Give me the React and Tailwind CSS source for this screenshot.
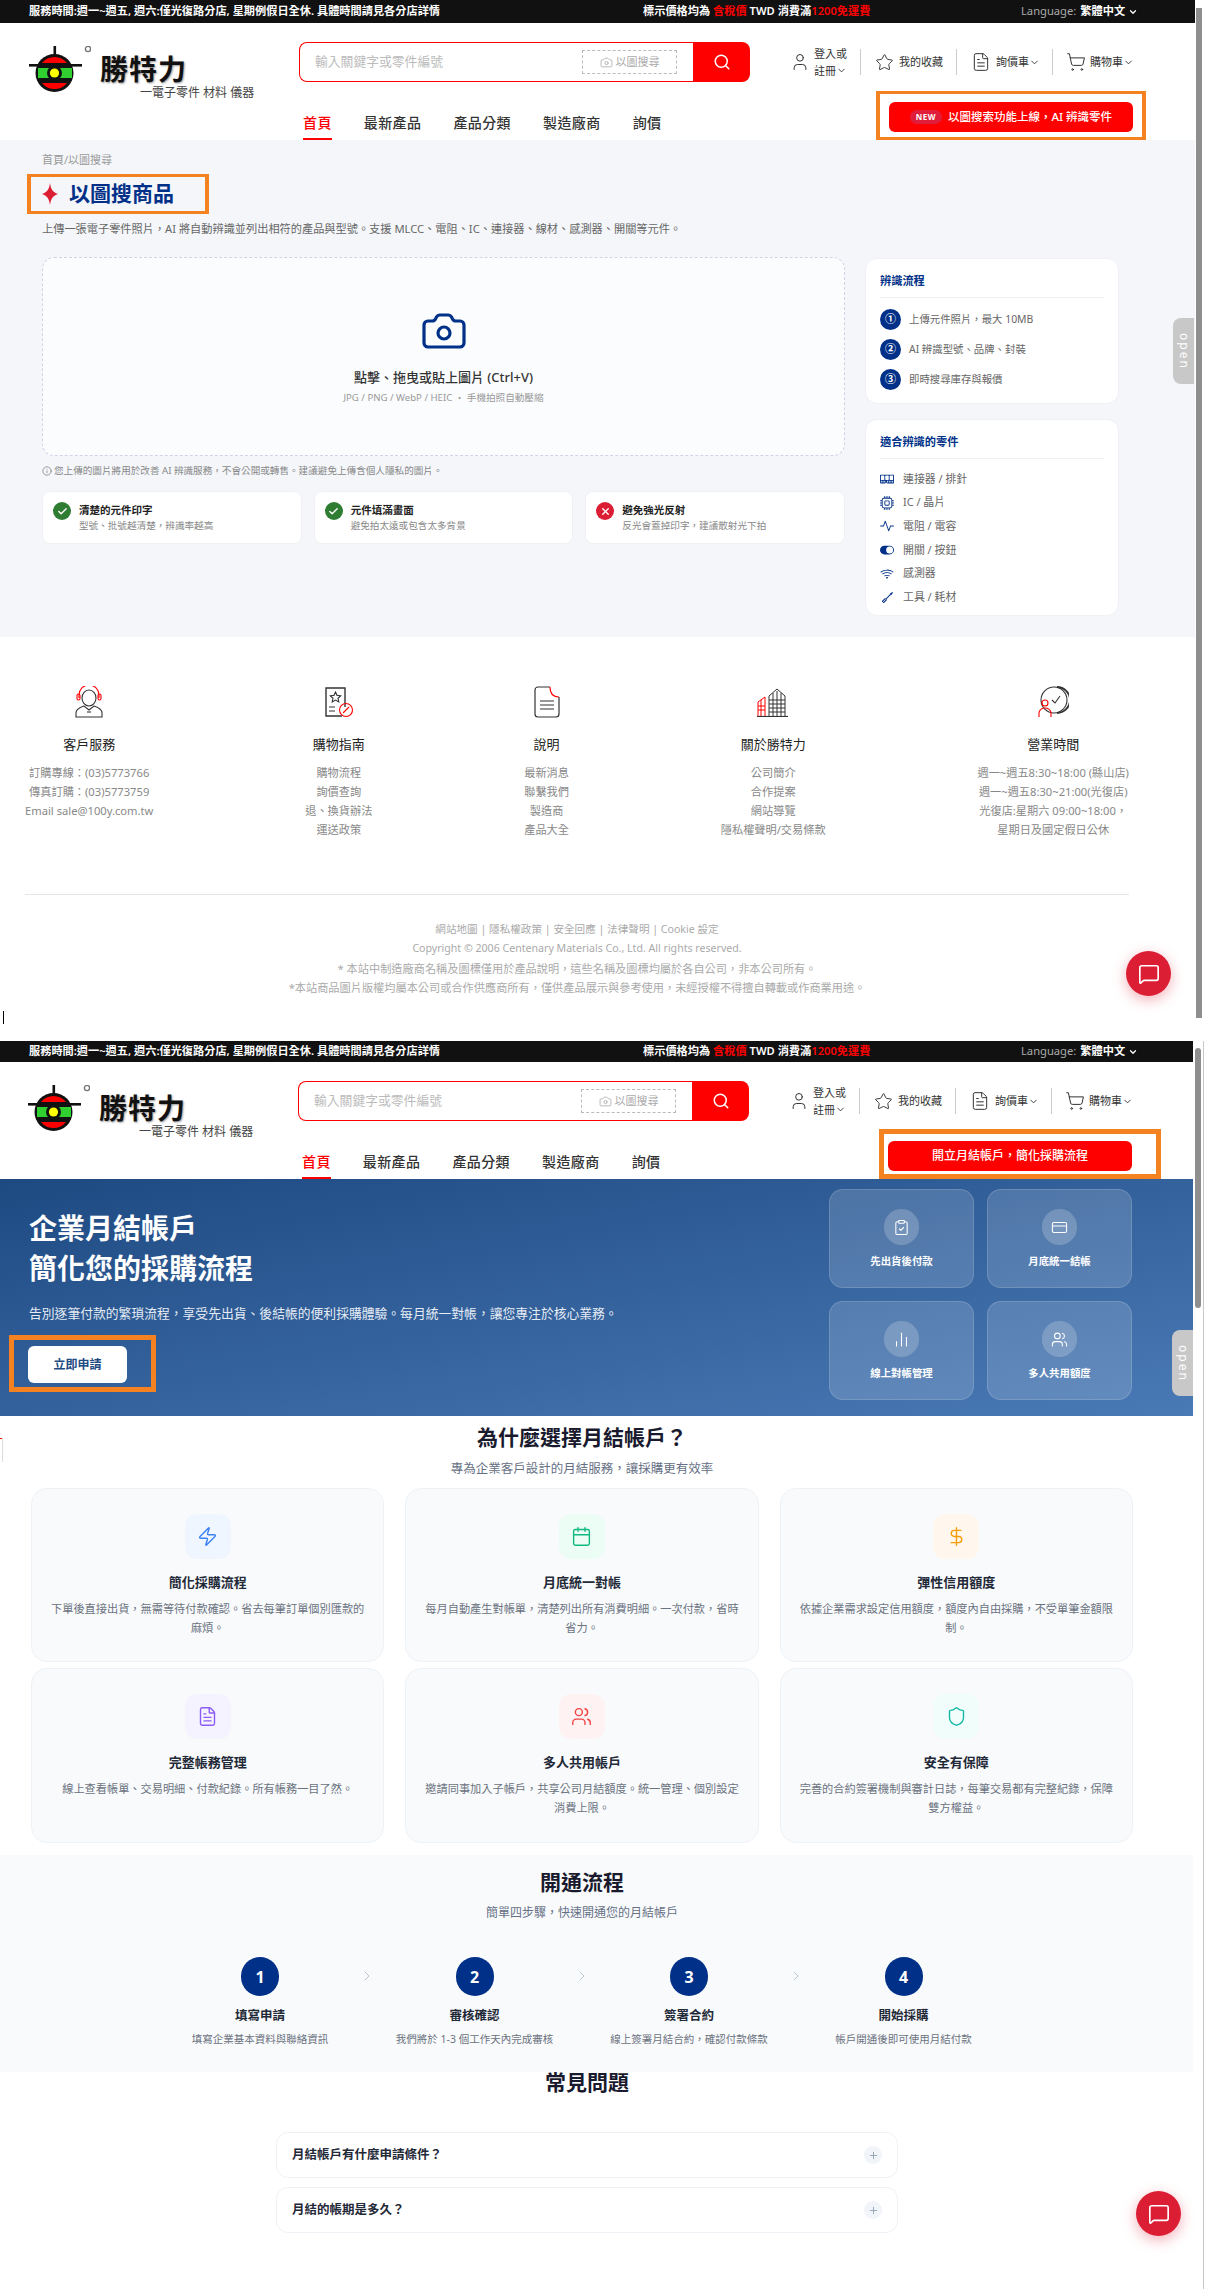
import {
  Camera, Search, User, Star, FileText, ShoppingCart, ChevronDown, ChevronRight, Check, X, Info, Plus,
  MessageSquare, ClipboardCheck, CreditCard, ChartNoAxesColumn, Users, Zap, Calendar, DollarSign, Shield,
} from 'lucide-react';
import { BsMemory, BsCpu, BsActivity, BsToggleOn, BsWifi, BsScrewdriver } from 'react-icons/bs';

const NAV = ['最新產品', '產品分類', '製造廠商', '詢價'];

const STEPS = ['上傳元件照片，最大 10MB', 'AI 辨識型號、品牌、封裝', '即時搜尋庫存與報價'];

const PARTS = [
  { icon: BsMemory, label: '連接器 / 排針', size: 14, flip: false },
  { icon: BsCpu, label: 'IC / 晶片', size: 14, flip: false },
  { icon: BsActivity, label: '電阻 / 電容', size: 14, flip: false },
  { icon: BsToggleOn, label: '開關 / 按鈕', size: 14, flip: false },
  { icon: BsWifi, label: '感測器', size: 14, flip: false },
  { icon: BsScrewdriver, label: '工具 / 耗材', size: 11, flip: true },
];

const TIPS = [
  { ok: true, title: '清楚的元件印字', desc: '型號、批號越清楚，辨識率越高' },
  { ok: true, title: '元件填滿畫面', desc: '避免拍太遠或包含太多背景' },
  { ok: false, title: '避免強光反射', desc: '反光會蓋掉印字，建議散射光下拍' },
];

const FOOTER = [
  { icon: HeadsetIcon, title: '客戶服務', lines: ['訂購專線：(03)5773766', '傳真訂購：(03)5773759', 'Email sale@100y.com.tw'] },
  { icon: GuideIcon, title: '購物指南', lines: ['購物流程', '詢價查詢', '退、換貨辦法', '運送政策'] },
  { icon: DocIcon, title: '說明', lines: ['最新消息', '聯繫我們', '製造商', '產品大全'] },
  { icon: BuildingIcon, title: '關於勝特力', lines: ['公司簡介', '合作提案', '網站導覽', '隱私權聲明/交易條款'] },
  { icon: ClockIcon, title: '營業時間', lines: ['週一~週五8:30~18:00 (縣山店)', '週一~週五8:30~21:00(光復店)', '光復店:星期六 09:00~18:00，', '星期日及國定假日公休'] },
];

const HERO_CARDS = [
  { icon: ClipboardCheck, label: '先出貨後付款' },
  { icon: CreditCard, label: '月底統一結帳' },
  { icon: ChartNoAxesColumn, label: '線上對帳管理' },
  { icon: Users, label: '多人共用額度' },
];

const FEATURES = [
  { icon: Zap, box: 'bg-[#eff6ff]', color: 'text-[#3b82f6]', title: '簡化採購流程', desc: '下單後直接出貨，無需等待付款確認。省去每筆訂單個別匯款的麻煩。' },
  { icon: Calendar, box: 'bg-[#ecfdf5]', color: 'text-[#10b981]', title: '月底統一對帳', desc: '每月自動產生對帳單，清楚列出所有消費明細。一次付款，省時省力。' },
  { icon: DollarSign, box: 'bg-[#fff7ed]', color: 'text-[#f59e0b]', title: '彈性信用額度', desc: '依據企業需求設定信用額度，額度內自由採購，不受單筆金額限制。' },
  { icon: FileText, box: 'bg-[#f5f3ff]', color: 'text-[#8b5cf6]', title: '完整帳務管理', desc: '線上查看帳單、交易明細、付款紀錄。所有帳務一目了然。' },
  { icon: Users, box: 'bg-[#fef2f2]', color: 'text-[#ef4444]', title: '多人共用帳戶', desc: '邀請同事加入子帳戶，共享公司月結額度。統一管理、個別設定消費上限。' },
  { icon: Shield, box: 'bg-[#f0fdfa]', color: 'text-[#14b8a6]', title: '安全有保障', desc: '完善的合約簽署機制與審計日誌，每筆交易都有完整紀錄，保障雙方權益。' },
];

const PROCESS = [
  { title: '填寫申請', desc: '填寫企業基本資料與聯絡資訊' },
  { title: '審核確認', desc: '我們將於 1-3 個工作天內完成審核' },
  { title: '簽署合約', desc: '線上簽署月結合約，確認付款條款' },
  { title: '開始採購', desc: '帳戶開通後即可使用月結付款' },
];

const LEGAL = [
  '* 本站中制造廠商名稱及圖標僅用於產品說明，這些名稱及圖標均屬於各自公司，非本公司所有。',
  '*本站商品圖片版權均屬本公司或合作供應商所有，僅供產品展示與參考使用，未經授權不得擅自轉載或作商業用途。',
];

function HeadsetIcon() {
  return (
    <svg width="30" height="32" viewBox="0 0 30 32" fill="none" stroke="#333" strokeWidth="1.1">
      <path d="M5 12V9a10 10 0 0 1 20 0v3" stroke="#f00" />
      <rect x="3" y="8" width="3" height="6" rx="1.5" stroke="#f00" />
      <rect x="24" y="8" width="3" height="6" rx="1.5" stroke="#f00" />
      <ellipse cx="15" cy="12" rx="7" ry="8" />
      <path d="M2 31v-4c0-4 5-6 8-7l5 4 5-4c3 1 8 3 8 7v4z" />
      <path d="M13 26h4" />
    </svg>
  );
}

function GuideIcon() {
  return (
    <svg width="30" height="32" viewBox="0 0 30 32" fill="none" stroke="#333" strokeWidth="1.1">
      <path d="M21 21V2H2v28h16" strokeWidth="1.4" />
      <path d="M11.500 6l1.600 3.400 3.600.4-2.700 2.500.8 3.600-3.300-1.800-3.300 1.800.8-3.600L6.300 9.800l3.600-.4z" />
      <path d="M5 21h6M5 25h6" />
      <circle cx="22" cy="24" r="6.5" stroke="#f00" />
      <path d="M19 27l6-6" stroke="#f00" />
    </svg>
  );
}

function DocIcon() {
  return (
    <svg width="28" height="32" viewBox="0 0 28 32" fill="none" stroke="#333" strokeWidth="1.2">
      <path d="M17 1H5a3 3 0 0 0-3 3v24a3 3 0 0 0 3 3h18a3 3 0 0 0 3-3V11" />
      <path d="M17 1c0 6 2 10 9 10" stroke="#f00" />
      <path d="M7 15h14M7 19h14M7 23h14" />
    </svg>
  );
}

function BuildingIcon() {
  return (
    <svg width="32" height="30" viewBox="0 0 32 30" fill="none" stroke="#333" strokeWidth="1">
      <path d="M12 29V9l8-7 8 7v20M16 6v23M20 4v25M24 6v23M12 13h16M12 17h16M12 21h16M12 25h16" />
      <path d="M1 29V15l7-5v19M1 19h7M1 23h7M4 13v16" stroke="#f00" />
      <path d="M0 29.500h31" strokeWidth="1.2" />
    </svg>
  );
}

function ClockIcon() {
  return (
    <svg width="32" height="32" viewBox="0 0 32 32" fill="none" stroke="#333" strokeWidth="1.1">
      <circle cx="17" cy="14" r="13" />
      <path d="M20 27a13 13 0 0 0 0-26" strokeWidth="1.8" />
      <path d="M15 14l3 3 5-7" />
      <circle cx="8" cy="17" r="3" stroke="#f00" />
      <path d="M2 31v-4c0-3 3-5 6-5s6 2 6 5v4" stroke="#f00" />
    </svg>
  );
}

function Logo() {
  return (
    <div className="flex w-[270px] h-[51px] shrink-0 mt-[4px]">
      <svg width="62" height="50" viewBox="0 0 62 50" className="shrink-0">
        <rect x="0" y="18" width="53" height="2.6" fill="#111" />
        <rect x="24.5" y="0" width="2.6" height="12" fill="#111" />
        <circle cx="25.5" cy="27" r="19" fill="#111" />
        <path d="M13 17a16 16 0 0 1 25 0z" fill="#f00" />
        <rect x="9" y="22" width="34" height="10" fill="#2fd02f" />
        <path d="M13 37h25a16 16 0 0 1-25 0z" fill="#f00" />
        <circle cx="25.5" cy="27" r="7.5" fill="#111" />
        <circle cx="25.5" cy="27" r="4.6" fill="#ff0" />
        <circle cx="59" cy="3" r="2.6" fill="none" stroke="#777" strokeWidth="1.4" />
      </svg>
      <div className="ml-[9px] flex flex-col">
        <div className="text-[28px] leading-[30px] mt-[8px] font-bold text-[#111] tracking-[1px] whitespace-nowrap [text-shadow:1px_1px_2px_#999]">勝特力</div>
        <div className="text-[12px] leading-[13px] mt-[2px] ml-[40px] text-[#444] whitespace-nowrap">一電子零件 材料 儀器</div>
      </div>
    </div>
  );
}

function TopBar({ height }) {
  return (
    <div className={`${height} bg-[#111] text-white text-[11.2px] font-semibold flex items-center pl-[29px] whitespace-nowrap`}>
      <span className="w-[614px]">服務時間:週一~週五, 週六:僅光復路分店, 星期例假日全休. 具體時間請見各分店詳情</span>
      <span className="w-[378px]">
        標示價格均為 <span className="text-[#f00]">含稅價</span> TWD 消費滿<span className="text-[#f00]">1200免運費</span>
      </span>
      <span className="text-[#aaa] font-normal">Language: </span>
      <span className="ml-1">繁體中文</span>
      <ChevronDown size={10} strokeWidth={3} className="ml-[3px]" />
    </div>
  );
}

function Actions() {
  return (
    <div className="flex items-center h-[40px] text-[11px] text-[#333] ml-[42px] whitespace-nowrap">
      <User size={20} strokeWidth={1.2} className="-ml-[2px]" />
      <div className="ml-[4px] leading-[17px]">
        <div>登入或</div>
        <div className="flex items-center">註冊<ChevronDown size={11} /></div>
      </div>
      <div className="w-px h-[26px] bg-[#ccc] ml-[13px]" />
      <Star size={19} strokeWidth={1.2} className="ml-[14px]" />
      <span className="ml-[5px]">我的收藏</span>
      <div className="w-px h-[26px] bg-[#ccc] ml-[13px]" />
      <FileText size={20} strokeWidth={1.2} className="ml-[14px]" />
      <span className="ml-[5px]">詢價車</span>
      <ChevronDown size={11} />
      <div className="w-px h-[26px] bg-[#ccc] ml-[12px]" />
      <ShoppingCart size={20} strokeWidth={1.2} className="ml-[13px]" />
      <span className="ml-[4px]">購物車</span>
      <ChevronDown size={11} />
    </div>
  );
}

function Header({ left, children }) {
  return (
    <div className={`h-[117px] bg-white ${left}`}>
      <div className="h-[68px] pt-[19px] flex">
        <Logo />
        <div className="w-[451px] h-[40px] flex shrink-0">
          <div className="flex-1 border-[1.5px] border-r-0 border-[#f00] rounded-l-lg flex items-center pl-[15px] pr-[16px] justify-between bg-white">
            <span className="text-[12.8px] text-[#bbb]">輸入關鍵字或零件編號</span>
            <div className="w-[95px] h-[24px] border border-dashed border-[#bbb] flex items-center justify-center gap-[3px] text-[11px] text-[#aaa]">
              <Camera size={13} strokeWidth={1.5} />
              <span>以圖搜尋</span>
            </div>
          </div>
          <div className="w-[57px] bg-[#f00] rounded-r-lg flex items-center justify-center">
            <Search size={18} strokeWidth={2} className="text-white" />
          </div>
        </div>
        <Actions />
      </div>
      <div className="h-[49px] flex items-end justify-between">
        <div className="flex ml-[274px] gap-[32px] text-[14px] tracking-[0.4px] text-[#333] font-medium">
          <span className="h-[36px] pt-[8px] text-[#f00] border-b-2 border-[#f00]">首頁</span>
          {NAV.map((n) => <span key={n} className="h-[36px] pt-[8px]">{n}</span>)}
        </div>
        {children}
      </div>
    </div>
  );
}

function UploadPanel() {
  return (
    <div className="w-[803px] shrink-0">
      <div className="h-[199px] bg-[#fbfcfe] border border-dashed border-[#cfd3e6] rounded-xl flex flex-col items-center pt-[49px]">
        <Camera size={48} strokeWidth={1.6} className="text-[#003087]" />
        <div className="mt-[12px] text-[13px] leading-[20px] text-[#333] font-medium">點擊、拖曳或貼上圖片 (Ctrl+V)</div>
        <div className="mt-[3px] text-[9.6px] leading-[16px] text-[#999]">JPG / PNG / WebP / HEIC ・ 手機拍照自動壓縮</div>
      </div>
      <div className="mt-[8px] h-[14px] flex items-center gap-[2px] text-[9.6px] text-[#888]">
        <Info size={10} />
        <span>您上傳的圖片將用於改善 AI 辨識服務，不會公開或轉售。建議避免上傳含個人隱私的圖片。</span>
      </div>
      <div className="mt-[13px] grid grid-cols-3 gap-[12px]">
        {TIPS.map((t) => (
          <div key={t.title} className="h-[53px] bg-white rounded-lg border border-[#f0f1f5] flex items-start pt-[10px] pl-[10px]">
            <div className={`w-[18px] h-[18px] rounded-full flex items-center justify-center text-white ${t.ok ? 'bg-[#2e7d32]' : 'bg-[#dc1e35]'}`}>
              {t.ok ? <Check size={11} strokeWidth={3} /> : <X size={11} strokeWidth={3} />}
            </div>
            <div className="ml-[8px]">
              <div className="text-[10.5px] leading-[16px] font-semibold text-[#222]">{t.title}</div>
              <div className="text-[9.6px] leading-[15px] text-[#888]">{t.desc}</div>
            </div>
          </div>
        ))}
      </div>
    </div>
  );
}

function SidePanels() {
  return (
    <div className="w-[254px] ml-[20px] mt-px shrink-0">
      <div className="h-[146px] bg-white rounded-xl border border-[#f0f1f5] px-[14px]">
        <div className="h-[39px] flex items-center pt-[6px] border-b-[1.5px] border-[#eef0f4] text-[11.2px] font-bold text-[#003087]">辨識流程</div>
        <div className="mt-[11px] flex flex-col gap-[9px]">
          {STEPS.map((s, i) => (
            <div key={s} className="flex items-center h-[21px]">
              <div className="w-[21px] h-[21px] rounded-full bg-[#003087] text-white text-[11px] flex items-center justify-center font-bold">{['①', '②', '③'][i]}</div>
              <span className="ml-[8px] text-[10.4px] text-[#666]">{s}</span>
            </div>
          ))}
        </div>
      </div>
      <div className="mt-[15px] h-[197px] bg-white rounded-xl border border-[#f0f1f5] px-[14px]">
        <div className="h-[39px] flex items-center pt-[6px] border-b-[1.5px] border-[#eef0f4] text-[11.2px] font-bold text-[#003087]">適合辨識的零件</div>
        <div className="mt-[8px]">
          {PARTS.map((p) => (
            <div key={p.label} className="flex items-center h-[23.7px]">
              <div className="w-[14px] flex justify-center">
                <p.icon size={p.size} className={`text-[#003087] ${p.flip ? '-scale-x-100' : ''}`} />
              </div>
              <span className="ml-[9px] text-[10.9px] text-[#666]">{p.label}</span>
            </div>
          ))}
        </div>
      </div>
    </div>
  );
}

function Footer() {
  return (
    <div className="h-[379px] bg-white pt-[49px] px-[25px] w-[1154px]">
      <div className="flex justify-between">
        {FOOTER.map((c) => (
          <div key={c.title} className="flex flex-col items-center whitespace-nowrap">
            <div className="h-[32px] flex items-center"><c.icon /></div>
            <div className="mt-[18px] text-[13px] leading-[16px] text-[#222]">{c.title}</div>
            <div className="mt-[11px] text-[11.2px] leading-[19px] text-[#888] text-center h-[76px]">
              {c.lines.map((l) => <div key={l}>{l}</div>)}
            </div>
          </div>
        ))}
      </div>
      <div className="mt-[55px] h-px bg-[#e5e5e5]" />
      <div className="mt-[25px] text-center text-[11.2px] leading-[19.3px] text-[#aaa] whitespace-nowrap">
        <div className="text-[10.6px]">網站地圖 | 隱私權政策 | 安全回應 | 法律聲明 | Cookie 設定</div>
        <div className="text-[10.6px]">Copyright © 2006 Centenary Materials Co., Ltd. All rights reserved.</div>
        {LEGAL.map((l) => <div key={l}>{l}</div>)}
      </div>
    </div>
  );
}

function ChatButton({ className }) {
  return (
    <div className={`absolute w-[45px] h-[45px] rounded-full bg-[#dc1e35] flex items-center justify-center shadow-[0_4px_14px_rgba(220,30,53,0.35)] ${className}`}>
      <MessageSquare size={22} strokeWidth={1.8} className="text-white" />
    </div>
  );
}

function OpenTab({ className }) {
  return (
    <div className={`absolute w-[21px] h-[66px] bg-[#c8c8c8] rounded-l-lg flex items-center justify-center text-white text-[12px] tracking-[2px] [writing-mode:vertical-rl] ${className}`}>open</div>
  );
}

function Hero() {
  return (
    <div className="h-[237px] bg-gradient-to-br from-[#1e4a82] to-[#4a7ab6] flex justify-between pr-[61px]">
      <div className="pl-[29px] pt-[29px]">
        <div className="text-[28px] leading-[40px] font-bold text-white">企業月結帳戶<br />簡化您的採購流程</div>
        <div className="mt-[15px] text-[12.8px] leading-[20px] text-[#e5ecf5]">告別逐筆付款的繁瑣流程，享受先出貨、後結帳的便利採購體驗。每月統一對帳，讓您專注於核心業務。</div>
        <div className="mt-[12px] -ml-[20px] w-[147px] h-[57px] border-[5px] border-[#f58220] pl-[14px] pt-[6px]">
          <div className="w-[99px] h-[37px] bg-white rounded-md flex items-center justify-center text-[12px] font-bold text-[#1e4a82]">立即申請</div>
        </div>
      </div>
      <div className="pt-[10px] grid grid-cols-2 gap-[13px] h-fit">
        {HERO_CARDS.map((c) => (
          <div key={c.label} className="w-[145px] h-[99px] rounded-[14px] bg-white/15 border border-white/15 flex flex-col items-center pt-[19px]">
            <div className="w-[35px] h-[36px] rounded-full bg-white/20 flex items-center justify-center">
              <c.icon size={17} strokeWidth={1.5} className="text-white" />
            </div>
            <div className="mt-[9px] text-[10.4px] font-semibold text-white">{c.label}</div>
          </div>
        ))}
      </div>
    </div>
  );
}

function Why() {
  return (
    <div className="pt-[6px] pb-[12px] bg-white">
      <div className="w-[1164px] text-center text-[21px] leading-[30px] font-bold text-[#1a1a2e]">為什麼選擇月結帳戶？</div>
      <div className="w-[1164px] text-center mt-[8px] text-[12.5px] leading-[18px] text-[#667085]">專為企業客戶設計的月結服務，讓採購更有效率</div>
      <div className="mt-[10px] ml-[31px] w-[1102px] grid grid-cols-3 gap-x-[21px] gap-y-[6px]">
        {FEATURES.map((f, i) => (
          <div key={f.title} className={`${i < 3 ? 'h-[174px]' : 'h-[175px]'} bg-[#f8fafc] border border-[#eef2f7] rounded-2xl flex flex-col items-center pt-[25px] px-[18px]`}>
            <div className={`w-[46px] h-[45px] rounded-xl flex items-center justify-center ${f.box}`}>
              <f.icon size={21} strokeWidth={1.6} className={f.color} />
            </div>
            <div className="mt-[13px] text-[13px] leading-[20px] font-bold text-[#1f2937]">{f.title}</div>
            <div className="mt-[7px] text-[11.2px] leading-[19px] text-[#6b7280] text-center">{f.desc}</div>
          </div>
        ))}
      </div>
    </div>
  );
}

function Process() {
  return (
    <div className="h-[217px] bg-[#f9fafc] pt-[12px]">
      <div className="w-[1164px] text-center text-[21px] leading-[30px] font-bold text-[#1a1a2e]">開通流程</div>
      <div className="w-[1164px] text-center mt-[7px] text-[12px] leading-[18px] text-[#667085]">簡單四步驟，快速開通您的月結帳戶</div>
      <div className="mt-[35px] ml-[173px] flex">
        {PROCESS.map((p, i) => (
          <div key={p.title} className="flex">
            <div className="w-[174px] flex flex-col items-center">
              <div className="w-[38px] h-[39px] rounded-full bg-[#003087] text-white text-[16px] font-bold flex items-center justify-center">{i + 1}</div>
              <div className="mt-[11px] text-[12.5px] leading-[18px] font-bold text-[#1f2937]">{p.title}</div>
              <div className="mt-[5px] text-[10.5px] leading-[18px] text-[#6b7280] whitespace-nowrap">{p.desc}</div>
            </div>
            {i < 3 && (
              <div className="w-[40.5px] h-[39px] flex items-center justify-center -mt-[1px]">
                <ChevronRight size={16} strokeWidth={1.4} className="text-[#b8c2d0]" />
              </div>
            )}
          </div>
        ))}
      </div>
    </div>
  );
}

function Faq() {
  return (
    <div className="ml-[276px] w-[622px]">
      <div className="text-center text-[21px] leading-[20px] font-bold text-[#1a1a2e]">常見問題</div>
      <div className="mt-[40px] flex flex-col gap-[9px]">
        {['月結帳戶有什麼申請條件？', '月結的帳期是多久？'].map((q) => (
          <div key={q} className="h-[46px] bg-white border border-[#eef2f7] rounded-xl flex items-center justify-between pl-[15px] pr-[15px]">
            <span className="text-[12.5px] font-semibold text-[#1f2937]">{q}</span>
            <div className="w-[18px] h-[18px] rounded-full bg-[#f1f4f9] flex items-center justify-center">
              <Plus size={11} className="text-[#94a3b8]" />
            </div>
          </div>
        ))}
      </div>
    </div>
  );
}

export default function App() {
  return (
    <div className="relative w-[1208px] h-[2289px] overflow-hidden bg-white font-['Noto_Sans','Noto_Sans_CJK_TC',sans-serif]">
      {/* first capture: image search */}
      <div className="w-[1195px] h-[1041px]">
        <TopBar height="h-[23px]" />
        <Header left="pl-[29px]">
          <div className="mr-[49px] w-[270px] h-[49px] border-x-4 border-y-[3px] border-[#f58220] pl-[9px] pt-[8px]">
            <div className="w-[244px] h-[30px] bg-[#f00] rounded-md flex items-center justify-center gap-[6px]">
              <span className="w-[32px] h-[14px] rounded-full bg-[#e01e3c] text-white text-[8px] font-bold flex items-center justify-center tracking-[0.5px]">NEW</span>
              <span className="text-white text-[11.5px] font-medium">以圖搜索功能上線，AI 辨識零件</span>
            </div>
          </div>
        </Header>
        <div className="h-[497px] bg-[#f4f6fa] pl-[42px] pt-[13px]">
          <div className="h-[14px] flex items-center text-[11px] text-[#999]">首頁/以圖搜尋</div>
          <div className="mt-[7px] -ml-[15px] w-[182px] h-[40px] border-x-4 border-y-[3px] border-[#f58220] flex items-center pl-[11px]">
            <svg width="16" height="22" viewBox="0 0 16 22" fill="#dc1e35"><path d="M8 0c.8 6 2.500 9 8 11-5.500 2-7.200 5-8 11-.8-6-2.500-9-8-11 5.500-2 7.200-5 8-11z" /></svg>
            <span className="ml-[11px] text-[21px] font-bold text-[#003087]">以圖搜商品</span>
          </div>
          <div className="mt-[8px] h-[14px] flex items-center text-[11.2px] text-[#666]">上傳一張電子零件照片，AI 將自動辨識並列出相符的產品與型號。支援 MLCC、電阻、IC、連接器、線材、感測器、開關等元件。</div>
          <div className="mt-[21px] flex items-start">
            <UploadPanel />
            <SidePanels />
          </div>
        </div>
        <Footer />
      </div>

      {/* second capture: monthly account */}
      <div className="w-[1193px]">
        <TopBar height="h-[21px]" />
        <Header left="pl-[28px]">
          <div className="mr-[32px] w-[282px] h-[50px] border-[5px] border-[#f58220] pl-[4px] pt-[7px] shrink-0">
            <div className="w-[244px] h-[30px] bg-[#f00] rounded-md flex items-center justify-center text-white text-[12px] font-medium">開立月結帳戶，簡化採購流程</div>
          </div>
        </Header>
        <Hero />
        <Why />
        <Process />
        <Faq />
      </div>

      <OpenTab className="left-[1173px] top-[318px]" />
      <OpenTab className="left-[1172px] top-[1330px]" />
      <ChatButton className="left-[1126px] top-[951px]" />
      <ChatButton className="left-[1136px] top-[2191px]" />
      {/* browser scrollbars left in the capture */}
      <div className="absolute left-[1196px] top-[8px] w-[6px] h-[1010px] bg-[#8e8e8e]" />
      <div className="absolute left-[1195px] top-[1048px] w-[6px] h-[260px] rounded-full bg-[#8e8e8e]" />
      <div className="absolute left-[1203px] top-[1041px] w-px h-[1248px] bg-[#c8c8c8]" />
      <div className="absolute left-[3px] top-[1011px] w-px h-[13px] bg-black" />
      <div className="absolute left-0 top-[1438px] w-[2px] h-px bg-[#f00]" />
      <div className="absolute left-[2px] top-[1438px] w-px h-[24px] bg-[#ddd]" />
    </div>
  );
}
